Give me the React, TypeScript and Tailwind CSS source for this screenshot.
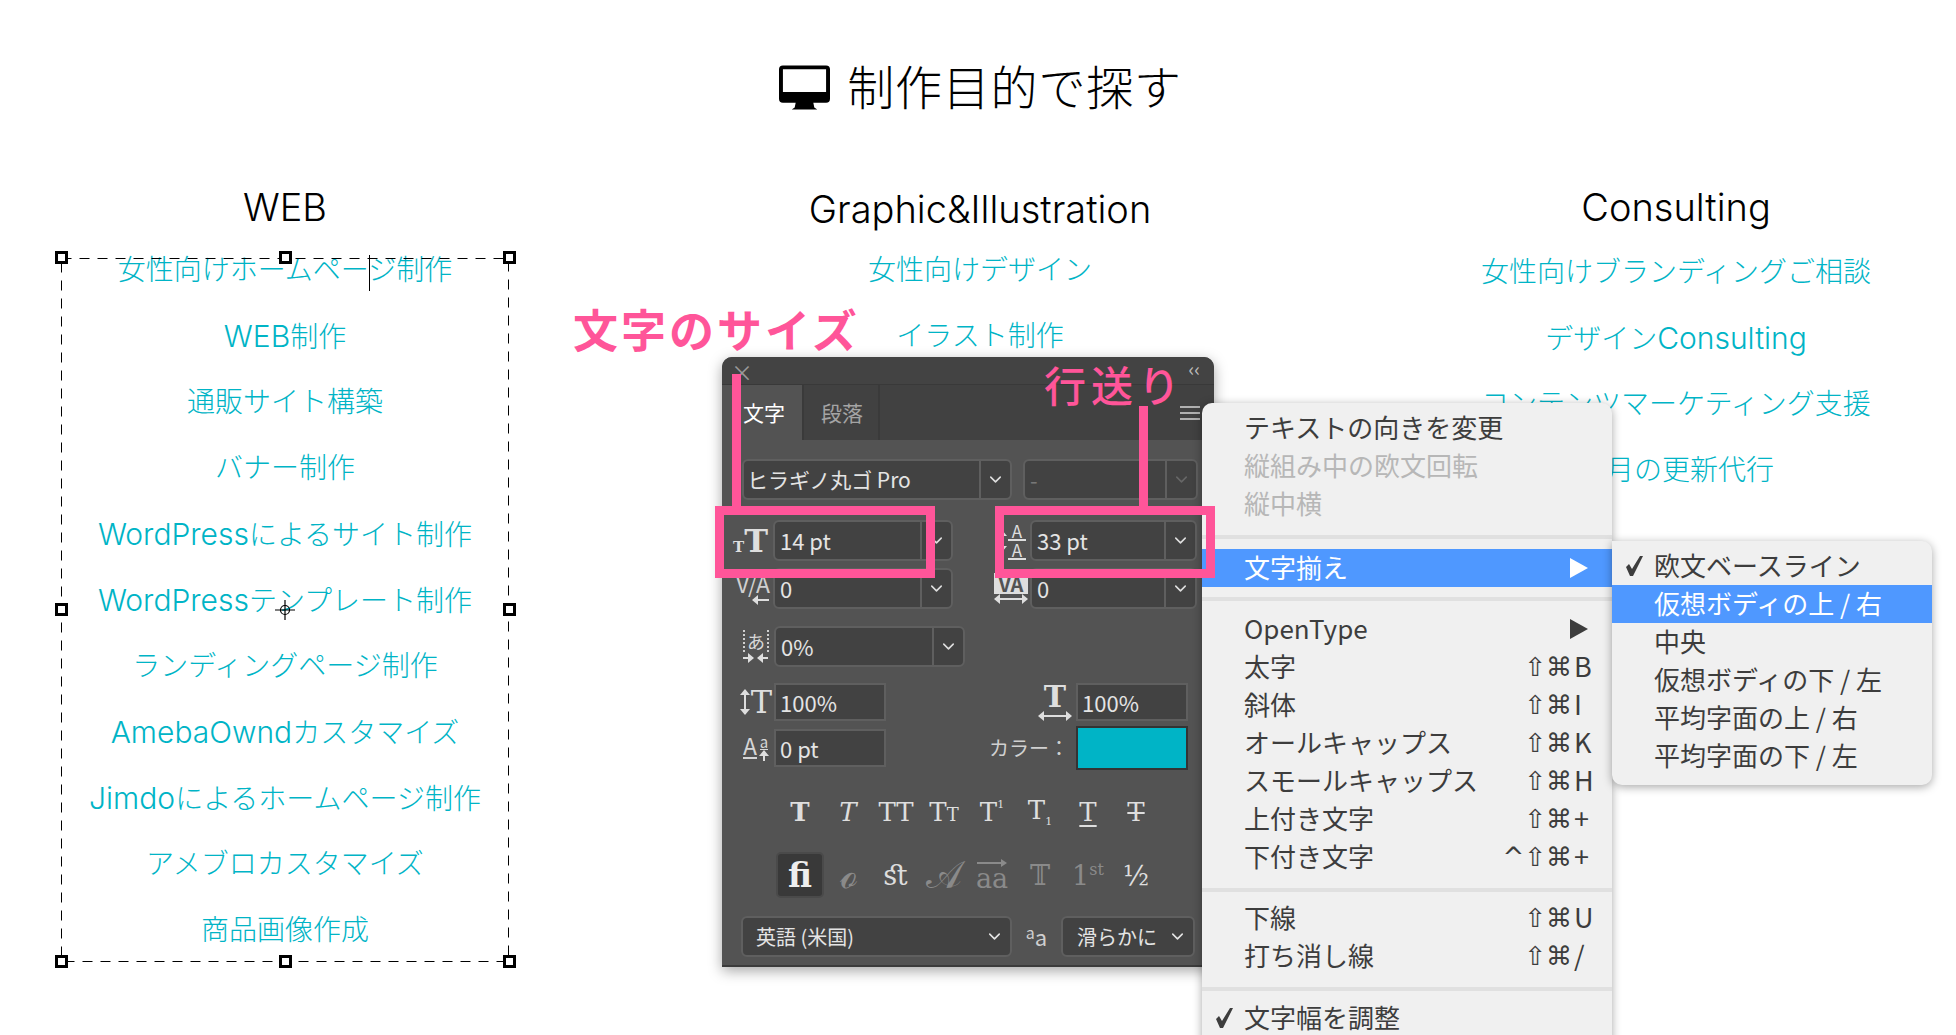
import { ChevronDown } from 'lucide-react';
import type { ReactNode } from 'react';

const WEB = ['女性向けホームページ制作', 'WEB制作', '通販サイト構築', 'バナー制作', 'WordPressによるサイト制作', 'WordPressテンプレート制作', 'ランディングページ制作', 'AmebaOwndカスタマイズ', 'Jimdoによるホームページ制作', 'アメブロカスタマイズ', '商品画像作成'];
const GRAPHIC = ['女性向けデザイン', 'イラスト制作'];
const CONSULTING = ['女性向けブランディングご相談', 'デザインConsulting', 'コンテンツマーケティング支援', '毎月の更新代行'];

const SUBMENU = ['欧文ベースライン', '仮想ボディの上 / 右', '中央', '仮想ボディの下 / 左', '平均字面の上 / 右', '平均字面の下 / 左'];

const HANDLES = ['left-[55px] top-[251px]', 'left-[279px] top-[251px]', 'left-[503px] top-[251px]', 'left-[55px] top-[603px]', 'left-[503px] top-[603px]', 'left-[55px] top-[955px]', 'left-[279px] top-[955px]', 'left-[503px] top-[955px]'];

function Column({ title, items, className, listClass }: { title: string; items: string[]; className: string; listClass: string }) {
  return (
    <section className={className}>
      <h3 className="h-[68px] flex items-center justify-center pb-[2px] text-[38px] text-black font-light font-['Inter','Noto_Sans_CJK_JP',sans-serif]">{title}</h3>
      <ul className={listClass}>
        {items.map((item) => (
          <li key={item} className="h-[66px] flex items-center justify-center text-[28px] text-[#00b4c6] font-light font-['Inter','Noto_Sans_CJK_JP',sans-serif]">
            <span>
              {/* latin runs sit a bit larger than the kana beside them */}
              {item.split(/([A-Za-z]+)/).map((part, i) => (i % 2 ? <span key={i} className="text-[30px]">{part}</span> : part))}
            </span>
          </li>
        ))}
      </ul>
    </section>
  );
}

function Combo({ w, h = 'h-[41px]', dim, children }: { w: string; h?: string; dim?: boolean; children?: ReactNode }) {
  return (
    <div className={`${w} ${h} flex rounded-[6px] border-2 border-[#5f5f5f] bg-[#424242] overflow-hidden ${dim ? 'text-[#777777]' : 'text-[#e4e4e4]'}`}>
      <div className="flex-1 flex items-center pl-[5px] text-[22px] whitespace-nowrap border-r-2 border-[#5f5f5f]">{children}</div>
      <div className="w-[29px] flex items-center justify-center"><ChevronDown size={19} strokeWidth={2} className={dim ? 'text-[#666666]' : 'text-[#dddddd]'} /></div>
    </div>
  );
}

function Field({ children }: { children: ReactNode }) {
  return <div className="w-[112px] h-[38px] flex items-center pl-[4px] border-2 border-[#5f5f5f] bg-[#424242] text-[22px] text-[#e4e4e4]">{children}</div>;
}

function Selection() {
  return (
    <>
      <svg className="absolute left-[61px] top-[258px]" width="448" height="704" fill="none">
        <rect x="0.5" y="0.5" width="447" height="703" stroke="#000" strokeDasharray="10 8" />
      </svg>
      {HANDLES.map((h) => <div key={h} className={`absolute w-[13px] h-[13px] border-[3px] border-black bg-white ${h}`} />)}
      <div className="absolute left-[369px] top-[255px] w-px h-[36px] bg-black" />
      <svg className="absolute left-[275px] top-[600px]" width="20" height="20" fill="none" stroke="#000" strokeWidth="1.2">
        <circle cx="10" cy="10" r="4.5" />
        <path d="M0 10h20M10 0v20" />
      </svg>
    </>
  );
}

function HArrow({ width, left = true, right = true }: { width: number; left?: boolean; right?: boolean }) {
  return (
    <svg width={width} height="10" viewBox={`0 0 ${width} 10`} fill="#dedede" className="block">
      <rect x="1" y="4" width={width - 2} height="2" />
      {left && <path d="M0 5l6-5v10z" />}
      {right && <path d={`M${width} 5l-6-5v10z`} />}
    </svg>
  );
}

function VArrow({ height, up = true, down = true }: { height: number; up?: boolean; down?: boolean }) {
  return (
    <svg width="10" height={height} viewBox={`0 0 10 ${height}`} fill="#dedede" className="block">
      <rect x="4" y="1" width="2" height={height - 2} />
      {up && <path d="M5 0l5 6H0z" />}
      {down && <path d={`M5 ${height}l5-6H0z`} />}
    </svg>
  );
}

function Panel() {
  const ink = "font-['DejaVu_Serif',serif] text-[#dedede]";
  return (
    <div className="absolute left-[722px] top-[357px] w-[492px] h-[610px] rounded-t-[10px] bg-[#535353] border-b-2 border-[#3b3b3b] shadow-[0_4px_14px_rgba(0,0,0,0.35)]">
      <div className="h-[27px] relative rounded-t-[10px] bg-[#434343]">
        <span className="absolute left-[9px] top-[3px] text-[22px] leading-[22px] text-[#9a9a9a]">×</span>
        <span className="absolute right-[14px] top-[1px] text-[19px] leading-[19px] text-[#bdbdbd]">‹‹</span>
      </div>
      <div className="h-[56px] flex bg-[#414141] border-t border-[#393939]">
        <div className="w-[80px] flex items-center pl-[21px] bg-[#535353] text-[21px] text-white">文字</div>
        <div className="w-[78px] flex items-center pl-[17px] border-x-2 border-[#3a3a3a] text-[21px] text-[#a4a4a4]">段落</div>
        <div className="flex-1 flex items-center justify-end pr-[14px]">
          <div className="w-[20px] h-[14px] border-y-2 border-[#b0b0b0] flex items-center"><div className="w-full h-[2px] bg-[#b0b0b0]" /></div>
        </div>
      </div>

      <div className="pt-[19px] pl-[20px] flex gap-[11px]">
        <Combo w="w-[270px]"><span className="-ml-[2px] text-[21px]">ヒラギノ丸ゴ Pro</span></Combo>
        <Combo w="w-[175px]" dim>-</Combo>
      </div>

      <div className="mt-[20px] h-[41px] flex items-center">
        <div className={`w-[51px] text-right pr-[5px] text-[32px] font-bold leading-none ${ink}`}><span className="text-[15px]">T</span>T</div>
        <Combo w="w-[180px]">14 pt</Combo>
        <div className="w-[77px] flex justify-end items-center gap-[1px] pr-[4px]">
          <VArrow height={22} />
          <div className="text-[17px] leading-[17px] text-[#dedede] text-center">
            <div className="w-[18px] border-b-2 border-[#dedede]">A</div>
            <div className="w-[18px] border-b-2 border-[#dedede]">A</div>
          </div>
        </div>
        <Combo w="w-[167px]">33 pt</Combo>
      </div>

      <div className="mt-[7px] h-[41px] flex items-center">
        <div className="w-[51px] flex flex-col items-end pr-[3px] text-[#d0d0d0]">
          <span className="text-[23px] leading-[23px] whitespace-nowrap">V/A</span>
          <HArrow width={18} right={false} />
        </div>
        <Combo w="w-[180px]">0</Combo>
        <div className="w-[77px] flex flex-col items-end pr-[2px]">
          <span className="w-[34px] bg-[#dedede] text-center text-[#535353] text-[20px] leading-[21px] font-bold">VA</span>
          <HArrow width={34} />
        </div>
        <Combo w="w-[167px]">0</Combo>
      </div>

      <div className="mt-[17px] h-[41px] flex items-center">
        <div className="w-[52px] flex flex-col items-end pr-[5px]">
          <span className="w-[26px] border-x-2 border-dotted border-[#cfcfcf] text-center text-[18px] leading-[22px] text-[#d8d8d8]">あ</span>
          <div className="flex gap-[3px] mt-[1px]"><HArrow width={12} left={false} /><HArrow width={12} right={false} /></div>
        </div>
        <Combo w="w-[191px]">0%</Combo>
      </div>

      <div className="mt-[16px] h-[38px] flex items-center">
        <div className={`w-[52px] flex items-center justify-end gap-[1px] pr-[2px] text-[32px] leading-none ${ink}`}><VArrow height={26} /><span>T</span></div>
        <Field>100%</Field>
        <div className={`w-[190px] flex flex-col items-end pr-[4px] text-[30px] font-bold leading-[28px] ${ink}`}>
          <span className="w-[34px] text-center">T</span>
          <HArrow width={34} />
        </div>
        <Field>100%</Field>
      </div>

      <div className="mt-[8px] h-[38px] flex items-center">
        <div className="w-[52px] flex items-start justify-end gap-[2px] pr-[5px] text-[#d6d6d6]">
          <span className="text-[23px] leading-[23px] border-b-2 border-[#d6d6d6]">A</span>
          <div className="flex flex-col items-center">
            <span className="text-[15px] leading-[15px] border-b border-[#d6d6d6]">a</span>
            <VArrow height={12} down={false} />
          </div>
        </div>
        <Field>0 pt</Field>
        <div className="w-[190px] text-right pr-[7px] text-[20px] text-[#d0d0d0]">カラー：</div>
        <div className="w-[112px] h-[44px] bg-[#00b4c6] border-2 border-[#333333]" />
      </div>

      <div className={`mt-[25px] h-[40px] pl-[54px] flex items-center text-[26px] leading-none ${ink}`}>
        <span className="w-[48px] text-center font-bold">T</span>
        <span className="w-[48px] text-center italic">T</span>
        <span className="w-[48px] text-center whitespace-nowrap">TT</span>
        <span className="w-[48px] text-center whitespace-nowrap">T<span className="text-[18px]">T</span></span>
        <span className="w-[48px] text-center whitespace-nowrap">T<span className="text-[11px] align-top">1</span></span>
        <span className="w-[48px] text-center whitespace-nowrap">T<span className="text-[11px] align-sub">1</span></span>
        <span className="w-[48px] text-center underline underline-offset-[4px]">T</span>
        <span className="w-[48px] text-center line-through">T</span>
      </div>

      <div className={`mt-[20px] h-[46px] pl-[54px] flex items-center text-[27px] leading-none ${ink}`}>
        <span className="w-[48px] h-[46px] flex items-center justify-center rounded-[5px] border-2 border-[#4a4a4a] bg-[#393939] text-[33px] font-bold text-[#eeeeee]">fi</span>
        <span className="w-[48px] text-center text-[#8a8a8a] text-[38px]">ℴ</span>
        <span className="w-[48px] text-center text-[#dddddd]">ﬆ</span>
        <span className="w-[48px] text-center text-[#8a8a8a] text-[38px]">𝒜</span>
        <span className="w-[48px] flex flex-col items-center text-[#8a8a8a]">
          <svg width="30" height="9" viewBox="0 0 30 9" fill="#8a8a8a" className="block"><rect y="3" width="28" height="2" /><path d="M30 4l-6-4v8z" /></svg>
          <span className="-mt-[3px]">aa</span>
        </span>
        <span className="w-[48px] text-center text-[#8a8a8a]">𝕋</span>
        <span className="w-[48px] text-center text-[#8a8a8a] whitespace-nowrap">1<span className="text-[16px] align-top">st</span></span>
        <span className="w-[48px] text-center">½</span>
      </div>

      <div className="mt-[18px] pl-[19px] flex items-center">
        <div className="w-[271px] h-[41px] flex items-center justify-between pl-[13px] pr-[6px] rounded-[6px] border-2 border-[#5f5f5f] bg-[#424242] text-[20px] text-[#e4e4e4]">英語 (米国)<ChevronDown size={19} /></div>
        <div className="w-[49px] text-center text-[22px] text-[#cfcfcf]"><span className="text-[16px] align-top">a</span>a</div>
        <div className="w-[134px] h-[41px] flex items-center justify-between pl-[14px] pr-[6px] rounded-[6px] border-2 border-[#5f5f5f] bg-[#424242] text-[20px] text-[#e4e4e4] whitespace-nowrap">滑らかに<ChevronDown size={19} /></div>
      </div>
    </div>
  );
}

function Check() {
  return <svg width="20" height="22" viewBox="0 0 20 22" fill="#3d3d3d"><path d="M1 12l3-3 3 5L15 1h3L8 21H5z" /></svg>;
}

function MenuRow({ label, keys, letter, disabled, check, active, arrow }: { label: string; keys?: string; letter?: string; disabled?: boolean; check?: boolean; active?: boolean; arrow?: boolean }) {
  return (
    <div className={`h-[38px] flex items-center ${active ? 'bg-[#4f98ff] text-white' : disabled ? 'text-[#b7b7b7]' : 'text-[#3d3d3d]'}`}>
      <span className="w-[42px] flex justify-center pl-[4px]">{check && <Check />}</span>
      <span className="flex-1 pb-[4px] text-[26px] whitespace-nowrap">{label}</span>
      {keys && <span className="font-['DejaVu_Sans',sans-serif] text-[26px] pr-[2px] whitespace-nowrap">{keys}</span>}
      {keys && <span className="w-[38px] pb-[2px] text-[27px]">{letter}</span>}
      {arrow && <span className={`mr-[24px] w-0 h-0 border-y-[10px] border-y-transparent border-l-[18px] ${active ? 'border-l-white' : 'border-l-[#3d3d3d]'}`} />}
    </div>
  );
}

function Sep({ className }: { className: string }) {
  return <div className={`h-[4px] bg-[#e0e0e0] ${className}`} />;
}

function Menu() {
  return (
    <div className="absolute left-[1202px] top-[403px] w-[410px] h-[640px] pt-[6px] rounded-t-[10px] bg-[#f0f0f0] shadow-[0_2px_10px_rgba(0,0,0,0.35)]">
      <MenuRow label="テキストの向きを変更" />
      <MenuRow label="縦組み中の欧文回転" disabled />
      <MenuRow label="縦中横" disabled />
      <Sep className="mt-[12px] mb-[10px]" />
      <MenuRow label="文字揃え" active arrow />
      <Sep className="mt-[10px] mb-[9px]" />
      <MenuRow label="OpenType" arrow />
      <MenuRow label="太字" keys="⇧⌘" letter="B" />
      <MenuRow label="斜体" keys="⇧⌘" letter="I" />
      <MenuRow label="オールキャップス" keys="⇧⌘" letter="K" />
      <MenuRow label="スモールキャップス" keys="⇧⌘" letter="H" />
      <MenuRow label="上付き文字" keys="⇧⌘" letter="+" />
      <MenuRow label="下付き文字" keys="^⇧⌘" letter="+" />
      <Sep className="mt-[12px] mb-[7px]" />
      <MenuRow label="下線" keys="⇧⌘" letter="U" />
      <MenuRow label="打ち消し線" keys="⇧⌘" letter="/" />
      <Sep className="mt-[12px] mb-[8px]" />
      <MenuRow label="文字幅を調整" check />
    </div>
  );
}

function Submenu() {
  return (
    <div className="absolute left-[1612px] top-[541px] w-[320px] pt-[6px] pb-[10px] rounded-r-[10px] rounded-bl-[10px] bg-[#f0f0f0] shadow-[0_2px_10px_rgba(0,0,0,0.35)]">
      {SUBMENU.map((s, i) => (
        <div key={s} className={`h-[38px] flex items-center text-[26px] whitespace-nowrap ${i === 1 ? 'bg-[#4f98ff] text-white' : 'text-[#3d3d3d]'}`}>
          <span className="w-[42px] flex justify-center pl-[4px]">{i === 0 && <Check />}</span>
          <span className="pb-[3px]">{s}</span>
        </div>
      ))}
    </div>
  );
}

function Annotations() {
  return (
    <>
      <div className="absolute left-[732px] top-[374px] w-[9px] h-[132px] bg-[#ff5599]" />
      <div className="absolute left-[1139px] top-[406px] w-[9px] h-[100px] bg-[#ff5599]" />
      <div className="absolute left-[715px] top-[506px] w-[220px] h-[72px] border-[9px] border-[#ff5599]" />
      <div className="absolute left-[995px] top-[506px] w-[220px] h-[72px] border-[9px] border-[#ff5599]" />
      <div className="absolute left-[573px] top-[297px] text-[45px] leading-[64px] tracking-[3px] font-bold text-[#ff5599] whitespace-nowrap">文字のサイズ</div>
      <div className="absolute left-[1044px] top-[352px] text-[42px] leading-[64px] tracking-[5px] font-medium text-[#ff5599] whitespace-nowrap">行送り</div>
    </>
  );
}

export default function App() {
  return (
    <div className="relative w-[1956px] h-[1035px] overflow-hidden bg-white font-['Noto_Sans_CJK_JP','Noto_Sans',sans-serif]">
      <header className="h-[174px] flex items-center justify-center gap-[17px] pl-[5px]">
        <svg width="51" height="45" viewBox="0 0 52 45" aria-hidden="true">
          <path fillRule="evenodd" d="M4 0h44a4 4 0 0 1 4 4v30a4 4 0 0 1-4 4H35l1 5 3 2H13l3-2 1-5H4a4 4 0 0 1-4-4V4a4 4 0 0 1 4-4zm0 4v23h44V4z" fill="#000" />
        </svg>
        <h2 className="pb-[3px] text-[47px] tracking-[0.8px] font-light text-black whitespace-nowrap">制作目的で探す</h2>
      </header>

      <div className="flex">
        <Column title="WEB" items={WEB} className="w-[570px]" listClass="-mt-[5px]" />
        <Column title="Graphic&Illustration" items={GRAPHIC} className="w-[820px] pt-[2px]" listClass="-mt-[7px]" />
        <Column title="Consulting" items={CONSULTING} className="w-[566px] pl-[6px]" listClass="-mt-[3px]" />
      </div>

      <Selection />
      <Panel />
      <Menu />
      <Submenu />
      <Annotations />
    </div>
  );
}
